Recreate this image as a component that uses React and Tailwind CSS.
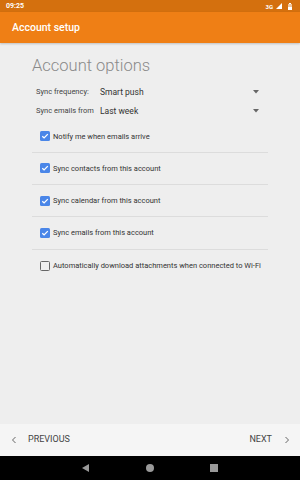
export default function App() {
  const rows = [
    { label: "Notify me when emails arrive", checked: true },
    { label: "Sync contacts from this account", checked: true },
    { label: "Sync calendar from this account", checked: true },
    { label: "Sync emails from this account", checked: true },
    { label: "Automatically download attachments when connected to Wi-Fi", checked: false },
  ];
  return (
    <div className="w-[300px] h-[480px] flex flex-col bg-[#eeeeee] overflow-hidden" style={{ fontFamily: "Roboto, 'Liberation Sans', sans-serif" }}>
      <div className="h-[12px] bg-[#d4700e] flex items-center justify-between px-[6px] text-white text-[7px] font-bold">
        <span>09:25</span>
        <span className="flex items-center gap-[3px] mr-[2px]">
          <span className="text-[6px]">3G</span>
          <svg width="6" height="6" viewBox="0 0 6 6"><path d="M0 6 L6 0 L6 6 Z" fill="white" /></svg>
          <svg width="4" height="7" viewBox="0 0 4 7" className="ml-[3px]"><rect x="1" y="0" width="2" height="1" fill="white" /><rect x="0" y="1" width="4" height="6" fill="white" opacity="0.6" /><rect x="0" y="4" width="4" height="3" fill="white" /></svg>
        </span>
      </div>
      <div className="h-[31px] bg-[#ef7f15] flex items-center pl-[12px] text-white text-[10.5px] font-medium shadow-[0_1px_2px_rgba(0,0,0,0.2)]">
        Account setup
      </div>
      <div className="flex-1 flex flex-col px-[32px]">
        <div className="mt-[13px] text-[16.5px] font-light text-[#8a8a8a] leading-[20px]">Account options</div>
        <div className="mt-[6.5px] flex items-center h-[19px] pl-[4px]">
          <span className="w-[64px] text-[7.5px] text-[#444]">Sync frequency:</span>
          <span className="flex-1 text-[8.5px] text-[#333]">Smart push</span>
          <svg width="6" height="4" viewBox="0 0 6 4" className="mr-[9px]"><path d="M0 0 L6 0 L3 3.5 Z" fill="#666" /></svg>
        </div>
        <div className="flex items-center h-[19px] pl-[4px]">
          <span className="w-[64px] text-[7.5px] text-[#444]">Sync emails from</span>
          <span className="flex-1 text-[8.5px] text-[#333]">Last week</span>
          <svg width="6" height="4" viewBox="0 0 6 4" className="mr-[9px]"><path d="M0 0 L6 0 L3 3.5 Z" fill="#666" /></svg>
        </div>
        <div>
          {rows.map((r, i) => (
            <div key={i} className={"h-[32.3px] flex items-center pl-[8px] " + (i < rows.length - 1 ? "border-b border-[#dcdcdc]" : "")}>
              {r.checked ? (
                <span className="w-[10px] h-[10px] rounded-[1.5px] bg-[#4a86e8] flex items-center justify-center">
                  <svg width="8" height="8" viewBox="0 0 8 8"><path d="M1.3 4.2 L3.1 5.9 L6.8 2.1" stroke="white" strokeWidth="1.3" fill="none" /></svg>
                </span>
              ) : (
                <span className="w-[10px] h-[10px] rounded-[1.5px] border-[1.3px] border-[#666]" />
              )}
              <span className="ml-[3px] text-[7.5px] text-[#333]">{r.label}</span>
            </div>
          ))}
        </div>
      </div>
      <div className="h-[32px] bg-[#f5f5f5] flex items-center justify-between text-[9px] text-[#444]">
        <div className="flex items-center">
          <svg width="6" height="8" viewBox="0 0 6 8" className="ml-[11px]"><path d="M4.5 1 L1.5 4 L4.5 7" stroke="#666" strokeWidth="1" fill="none" /></svg>
          <span className="ml-[11px]">PREVIOUS</span>
        </div>
        <div className="flex items-center">
          <span>NEXT</span>
          <svg width="6" height="8" viewBox="0 0 6 8" className="ml-[12px] mr-[10px]"><path d="M1.5 1 L4.5 4 L1.5 7" stroke="#666" strokeWidth="1" fill="none" /></svg>
        </div>
      </div>
      <div className="h-[24px] bg-black flex items-center justify-center gap-[54px]">
        <svg width="10" height="10" viewBox="0 0 10 10"><path d="M8 1 L8 9 L1 5 Z" fill="#999" /></svg>
        <svg width="10" height="10" viewBox="0 0 10 10"><circle cx="5" cy="5" r="4" fill="#999" /></svg>
        <svg width="10" height="10" viewBox="0 0 10 10"><rect x="1" y="1" width="8" height="8" fill="#999" /></svg>
      </div>
    </div>
  );
}
